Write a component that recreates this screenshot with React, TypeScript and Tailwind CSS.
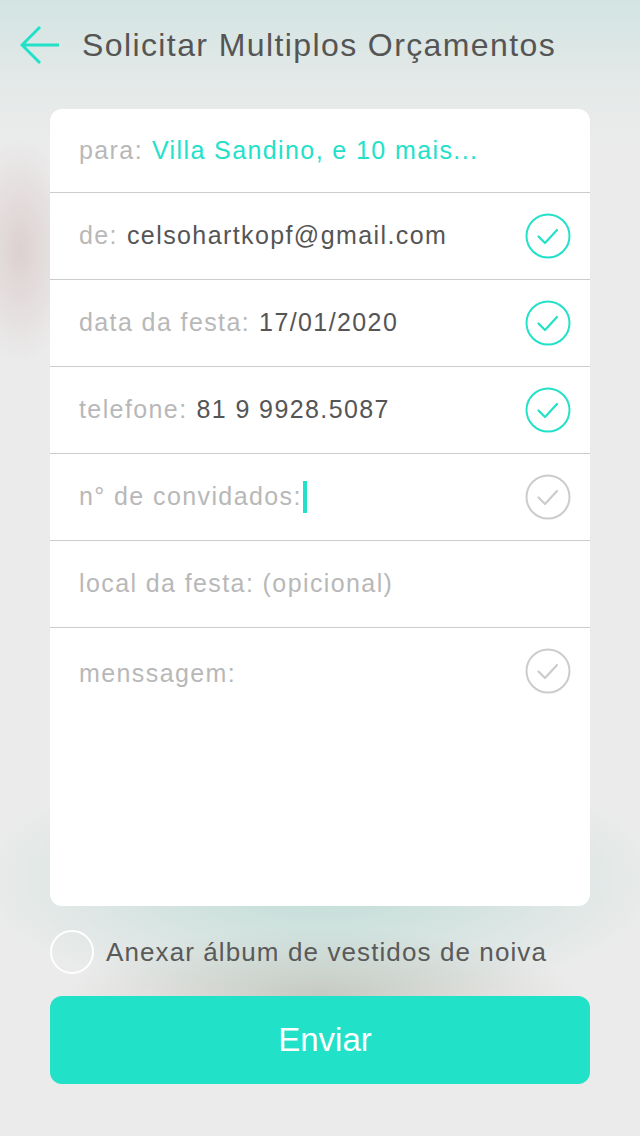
import React from "react";

const teal = "#22e1c9";

const Check = ({ on }: { on: boolean }) => (
  <svg width="46" height="46" viewBox="0 0 46 46" fill="none">
    <circle cx="23" cy="23" r="21.5" stroke={on ? teal : "#cccccc"} strokeWidth="2" />
    <path d="M13.5 23.5 L20 30 L32 17" stroke={on ? teal : "#cccccc"} strokeWidth="2.2" strokeLinecap="round" strokeLinejoin="round" />
  </svg>
);

const rows = [
  { label: "de:", value: "celsohartkopf@gmail.com", check: true },
  { label: "data da festa:", value: "17/01/2020", check: true },
  { label: "telefone:", value: "81 9 9928.5087", check: true },
  { label: "n° de convidados:", value: "", check: false, cursor: true },
  { label: "local da festa: (opicional)", value: "", check: null },
];

export default function App() {
  return (
    <div
      className="w-[640px] h-[1136px] overflow-hidden bg-[#ebebeb] relative font-['Liberation_Sans',Arial,sans-serif]"
      style={{
        backgroundImage:
          "linear-gradient(to bottom, rgba(200,225,222,0.7) 0px, rgba(220,232,230,0.4) 90px, transparent 150px), radial-gradient(ellipse 70px 150px at 20px 250px, rgba(212,190,190,0.6), transparent 75%), radial-gradient(ellipse 460px 170px at 320px 880px, rgba(160,210,200,0.6), transparent 75%), radial-gradient(ellipse 340px 90px at 320px 995px, rgba(190,190,180,0.75), transparent 75%)",
      }}
    >
      {/* header */}
      <div className="flex items-center h-[90px] pl-[20px]">
        <svg width="40" height="40" viewBox="0 0 40 40" fill="none" className="mr-[22px]">
          <path d="M20 2 L2 20 L20 38 M2 20 H39" stroke={teal} strokeWidth="3" />
        </svg>
        <h1 className="text-[32px] text-[#555555] tracking-[1.4px]">Solicitar Multiplos Orçamentos</h1>
      </div>

      <div className="px-[50px] pt-[19px]">
        <div className="bg-white rounded-[12px] overflow-hidden">
          <div className="h-[84px] flex items-center px-[29px] text-[25px] tracking-[1.4px] border-b border-[#cccccc]">
            <span className="text-[#b8b8b8]">para:</span>
            <span className="ml-[9px]" style={{ color: teal }}>Villa Sandino, e 10 mais...</span>
          </div>
          {rows.map((r, i) => (
            <div key={i} className="h-[87px] flex items-center justify-between pl-[29px] pr-[19px] text-[25px] tracking-[1.4px] border-b border-[#cccccc]">
              <div className="flex items-center">
                <span className="text-[#b8b8b8]">{r.label}</span>
                {r.value && <span className="ml-[9px] text-[#555555]">{r.value}</span>}
                {r.cursor && <span className="w-[4px] h-[32px] ml-[1px]" style={{ background: teal }} />}
              </div>
              {r.check !== null && <Check on={!!r.check} />}
            </div>
          ))}
          <div className="h-[278px] pl-[29px] pr-[19px] pt-[20px] flex justify-between items-start text-[25px] tracking-[1.4px]">
            <span className="text-[#b8b8b8] mt-[7px]">menssagem:</span>
            <Check on={false} />
          </div>
        </div>

        <div className="flex items-center mt-[24px] h-[44px]">
          <div className="w-[44px] h-[44px] rounded-full border-2 border-white" />
          <span className="ml-[12px] text-[26px] text-[#5a5a5a] tracking-[1.1px]">Anexar álbum de vestidos de noiva</span>
        </div>

        <button
          className="mt-[22px] w-full h-[88px] rounded-[12px] text-white text-[33px] pl-[10px]"
          style={{ background: teal }}
        >
          Enviar
        </button>
      </div>
    </div>
  );
}
